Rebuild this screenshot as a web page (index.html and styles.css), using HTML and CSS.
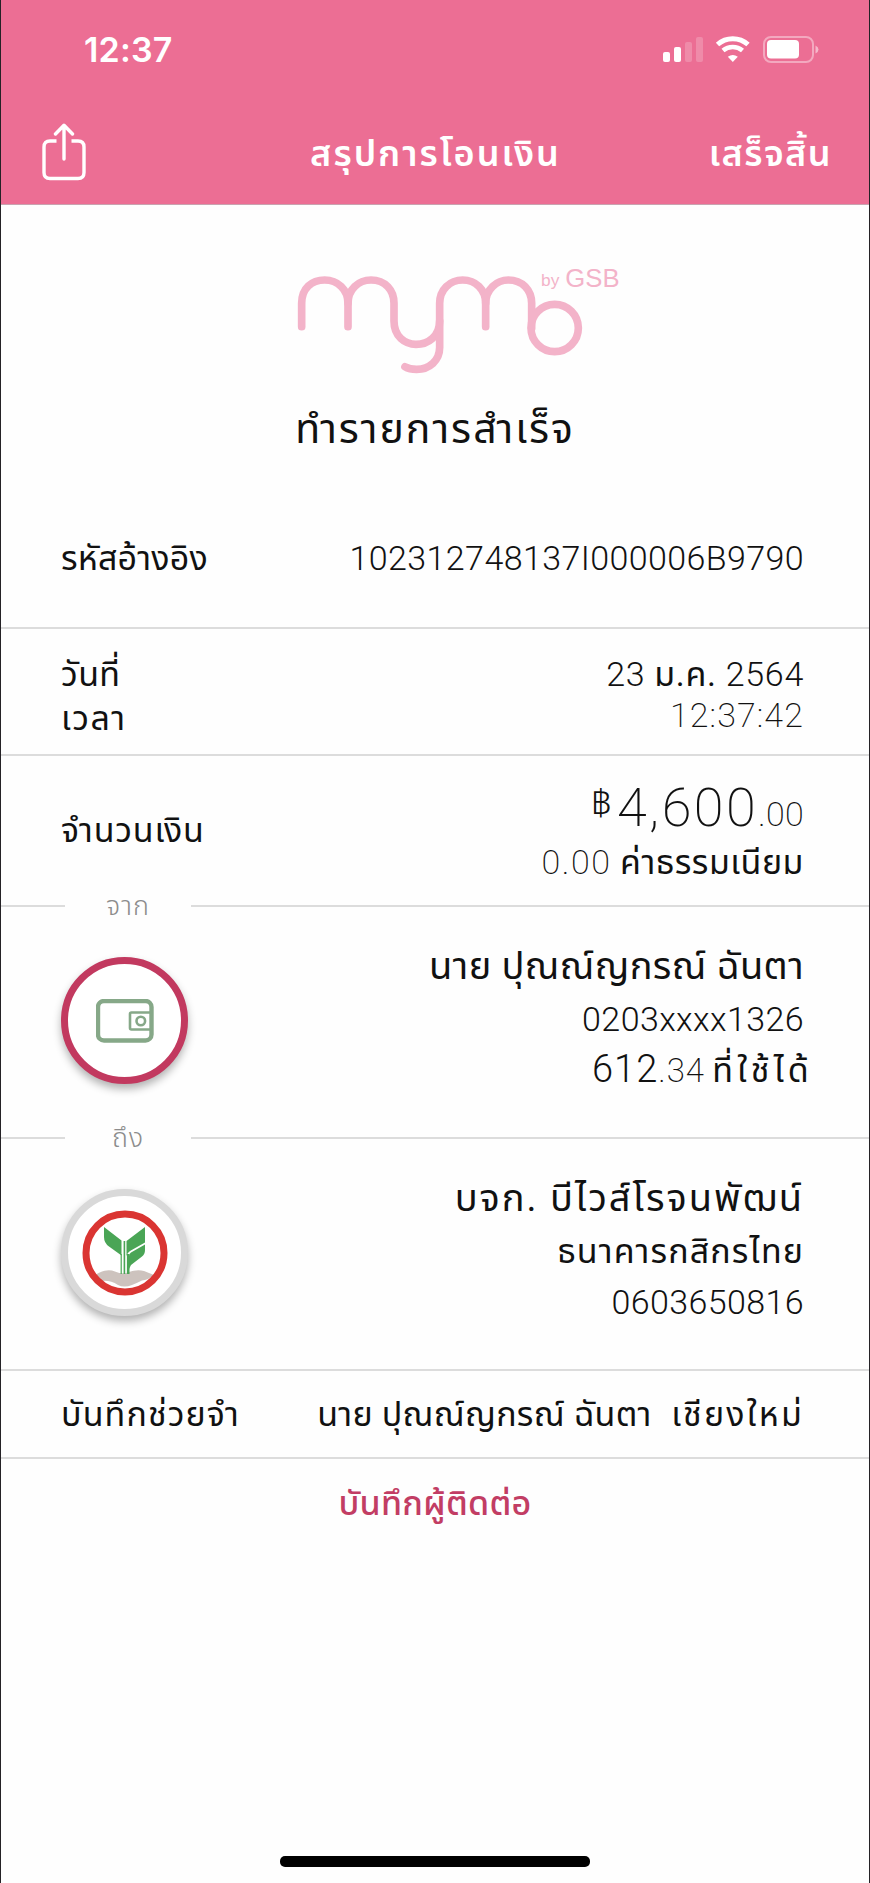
FILE: index.html
```
<!DOCTYPE html>
<html lang="th">
<head>
<meta charset="UTF-8">
<meta name="viewport" content="width=device-width, initial-scale=1.0">
<title>สรุปการโอนเงิน</title>
<link rel="stylesheet" href="styles.css">
</head>
<body>

<div class="screen">
  <header class="header">
    <div class="status-bar">
      <span class="clock">12:37</span>
      <svg class="status-icons" width="156" height="28" viewBox="0 0 156 28" fill="#fff">
        <rect x="0" y="16" width="7" height="10" rx="2"/>
        <rect x="11" y="11" width="7" height="15" rx="2"/>
        <rect x="22" y="6" width="7" height="20" rx="2" opacity=".2"/>
        <rect x="33" y="1" width="7" height="25" rx="2" opacity=".2"/>
        <path d="M54.5 8.5 A23 23 0 0 1 85 8.5" fill="none" stroke="#fff" stroke-width="5"/>
        <path d="M60 14.6 A15 15 0 0 1 79.5 14.6" fill="none" stroke="#fff" stroke-width="4.6"/>
        <path d="M69.8 26 L64.8 20.8 Q69.8 17 74.8 20.8 Z"/>
        <rect x="101" y="1" width="49" height="25" rx="7" fill="none" stroke="#fff" stroke-width="2" opacity=".4"/>
        <rect x="104" y="4" width="32" height="18.5" rx="4"/>
        <path d="M152.5 9.5 Q155.5 11 155.5 13.5 Q155.5 16 152.5 17.5 Z" opacity=".5"/>
      </svg>
    </div>
    <nav class="nav">
      <svg class="share" width="46" height="58" viewBox="0 0 46 58" fill="none" stroke="#fff" stroke-width="3.4" stroke-linecap="round" stroke-linejoin="round">
        <path d="M14.5 18 H8 Q2 18 2 24 V49.5 Q2 55.5 8 55.5 H36 Q42 55.5 42 49.5 V24 Q42 18 36 18 H29.5" stroke-linecap="butt"/>
        <path d="M22 36 V3 M13.5 11 L22 2.2 L30.5 11"/>
      </svg>
      <h1 class="title">สรุปการโอนเงิน</h1>
      <a class="done">เสร็จสิ้น</a>
    </nav>
  </header>

  <section class="intro">
    <svg class="logo" width="400" height="180" viewBox="-105 0 1200 540">
      <g fill="none" stroke="#f3b3c9" stroke-width="23" stroke-linecap="round" stroke-linejoin="round">
        <path d="M95 260 V190 C95 145 125 120 164 120 C203 120 234 148 234 190 V260"/>
        <path d="M234 190 C234 148 265 120 303 120 C345 120 372 150 372 190 V243 C372 290 405 313 438 313 C475 313 509 288 509 243"/>
        <path d="M405 380 C415 386 428 388 440 388 C478 388 509 362 509 322 V190 C509 148 540 120 578 120 C617 120 647 148 647 190 V260"/>
        <path d="M647 190 C647 148 680 120 715 120 C757 120 785 150 785 190 V265"/>
        <circle cx="854" cy="264" r="71"/>
      </g>
      <text class="logo-text" x="813" y="138" font-size="52">by</text>
      <text class="logo-text" x="886" y="140" font-size="77">GSB</text>
    </svg>
    <p class="success">ทำรายการสำเร็จ</p>
  </section>

  <section class="row reference">
    <p class="label-ref">รหัสอ้างอิง</p>
    <p class="ref-number">102312748137I000006B9790</p>
  </section>

  <section class="row datetime">
    <div>
      <p class="label-date">วันที่</p>
      <p class="label-time">เวลา</p>
    </div>
    <div class="right">
      <p class="date">23 <span class="month">ม.ค.</span> 2564</p>
      <p class="time">12:37:42</p>
    </div>
  </section>

  <section class="row amount">
    <p class="label-amount">จำนวนเงิน</p>
    <div class="right">
      <p class="total"><span class="baht">฿</span>4,600<span class="satang">.00</span></p>
      <p class="fee"><span class="fee-value">0.00</span> <span class="fee-label">ค่าธรรมเนียม</span></p>
    </div>
  </section>

  <div class="divider"><span>จาก</span></div>

  <section class="row account">
    <div class="avatar avatar-from">
      <svg width="58" height="44" viewBox="0 0 58 44" fill="none" stroke="#86a888">
        <rect x="2" y="2" width="53.5" height="39.5" rx="6" stroke-width="4.4"/>
        <path d="M54 13.5 H35.5 Q34 13.5 34 15 V29 Q34 30.5 35.5 30.5 H54" stroke-width="2.6"/>
        <circle cx="44.8" cy="22" r="4.3" stroke-width="2.6"/>
      </svg>
    </div>
    <div class="right">
      <p class="name name-from">นาย ปุณณ์ญกรณ์ ฉันตา</p>
      <p class="number">0203xxxx1326</p>
      <p class="balance">612<span class="balance-dec">.34</span> <span class="usable">ที่ใช้ได้</span></p>
    </div>
  </section>

  <div class="divider"><span>ถึง</span></div>

  <section class="row account account-to">
    <div class="avatar avatar-to">
      <svg width="86" height="86" viewBox="0 0 86 86">
        <path d="M13 65 Q22 59 30 60.5 Q38 64 44 63 Q54 59 62 61 L72 65 Q66 70 60 70.5 Q55 73 50 75 Q42 78 36 75 Q28 70 20 71 Z" fill="#cdc3be"/>
        <circle cx="43" cy="43" r="39" fill="none" stroke="#da3532" stroke-width="7"/>
        <g fill="#4aa556">
          <path d="M22 17 L39.5 30.5 V45.5 L27 36.5 Q22 33 22 27 Z"/>
          <path d="M44.5 44 V31 L63 17 V32.5 L48 41 Q45 43 44.5 46 Z"/>
          <path d="M47 59 V46 Q47 43.5 49 42.5 L63 34.5 V40 Q63 44 60 46.5 L49 55 Z"/>
          <path d="M38.6 44 H39.8 V64 H38.6 Z M41.6 31 H43.2 V64 H41.6 Z M44.9 44 H47.5 V64 H44.9 Z"/>
        </g>
      </svg>
    </div>
    <div class="right">
      <p class="name name-to">บจก. บีไวส์โรจนพัฒน์</p>
      <p class="bank">ธนาคารกสิกรไทย</p>
      <p class="number">0603650816</p>
    </div>
  </section>

  <section class="row memo">
    <p class="label-memo">บันทึกช่วยจำ</p>
    <p class="memo-text">นาย ปุณณ์ญกรณ์ ฉันตา&nbsp; <span class="city">เชียงใหม่</span></p>
  </section>

  <a class="save-contact">บันทึกผู้ติดต่อ</a>

  <div class="home-bar"></div>
</div>

</body>
</html>
```
FILE: styles.css
```
* {
  box-sizing: border-box;
}
body {
  margin: 0;
  font-family: Roboto, "Noto Sans Thai", "Noto Sans", sans-serif;
  font-weight: 400;
  font-size: 34px;
  line-height: 40px;
  color: #111;
}
p, h1 {
  margin: 0;
  white-space: nowrap;
}
svg {
  display: block;
}
.screen {
  display: flex;
  flex-direction: column;
  height: 1883px;
  border-left: 1px solid #242226;
  border-right: 1px solid #242226;
  background-color: #fefefe;
}

/* header */
.header {
  height: 205px;
  background-color: #ec6e94;
  border-bottom: 1px solid #c9a3b0;
  color: #fff;
}
.status-bar {
  display: flex;
  justify-content: space-between;
  height: 122px;
  padding: 30px 50px 0 83px;
}
.clock {
  font-family: Inter, sans-serif;
  font-weight: 600;
  font-size: 34px;
  letter-spacing: 0.2px;
}
.status-icons {
  margin-top: 6px;
}
.nav {
  display: grid;
  grid-template-columns: 250px 1fr 250px;
  padding: 0 37px 0 41px;
}
.share {
  margin-top: 1px;
}
.title, .done {
  padding-top: 12px;
  font-size: 36px;
  font-weight: 600;
  line-height: 40px;
  text-align: center;
  letter-spacing: 2px;
}
.title {
  margin-left: -3px;
}
.done {
  text-align: right;
  letter-spacing: 1.4px;
}

/* logo and result */
.intro {
  padding-top: 35px;
  text-align: center;
}
.logo {
  margin: 0 auto;
}
.logo-text {
  fill: #f3b3c9;
  font-family: "Liberation Sans", sans-serif;
}
.success {
  font-size: 41px;
  line-height: 50px;
  margin-top: -16px;
  letter-spacing: 2px;
}

/* detail rows */
.row {
  display: flex;
  justify-content: space-between;
  padding: 0 65px 0 60px;
}
.right {
  text-align: right;
}
.reference {
  height: 175px;
  padding-top: 84px;
  border-bottom: 2px solid #dcdcdc;
}
.label-ref {
  letter-spacing: 0.2px;
}
.ref-number {
  font-weight: 300;
  letter-spacing: 0.4px;
}
.datetime {
  height: 127px;
  padding-top: 25px;
  border-bottom: 2px solid #dcdcdc;
}
.label-date {
  letter-spacing: 0.4px;
}
.label-time {
  margin-top: 4px;
  letter-spacing: 1.5px;
}
.date {
  font-weight: 300;
  letter-spacing: 0.7px;
}
.month {
  font-weight: 400;
}
.time {
  margin-top: 1px;
  font-weight: 200;
  letter-spacing: 1.1px;
}
.amount {
  height: 140px;
}
.label-amount {
  padding-top: 54px;
  letter-spacing: 0.8px;
}
.total {
  padding-top: 22px;
  font-size: 54px;
  line-height: 60px;
  font-weight: 200;
  letter-spacing: 2.4px;
}
.baht {
  margin-right: 3px;
  font-size: 36px;
  font-weight: 300;
  line-height: 1;
  vertical-align: 11px;
}
.satang {
  font-size: 34px;
  line-height: 1;
  letter-spacing: 0.3px;
}
.fee {
  margin-top: 4px;
}
.fee-value {
  font-weight: 200;
  letter-spacing: 1.6px;
}
.fee-label {
  letter-spacing: 0.5px;
}
.divider {
  display: grid;
  grid-template-columns: 64px 126px 1fr;
  align-items: center;
  height: 20px;
  font-size: 27px;
  font-weight: 300;
  line-height: 20px;
  letter-spacing: 1px;
  color: #8c8c8c;
  text-align: center;
}
.divider::before, .divider::after {
  content: "";
  height: 2px;
  background-color: #dcdcdc;
}

/* accounts */
.account {
  height: 212px;
}
.account-to {
  height: 221px;
}
.avatar {
  display: flex;
  align-items: center;
  justify-content: center;
  width: 127px;
  height: 127px;
  margin-top: 41px;
  border: 7px solid #c2395f;
  border-radius: 50%;
  background-color: #fff;
  box-shadow: 0 5px 9px rgba(0, 0, 0, 0.3);
}
.avatar-to {
  border-color: #d9d9d9;
}
.name {
  padding-top: 26px;
  font-size: 38px;
  line-height: 48px;
}
.name-from {
  letter-spacing: 0.4px;
}
.name-to {
  letter-spacing: 2px;
}
.bank {
  margin-top: 9px;
  letter-spacing: 1.1px;
}
.number {
  margin-top: 9px;
  font-weight: 300;
  letter-spacing: 0.4px;
}
.account-to .number {
  margin-top: 11px;
}
.balance {
  margin-top: 10px;
  margin-right: -9px;
  font-size: 38px;
  font-weight: 300;
  letter-spacing: 1px;
}
.balance-dec {
  font-size: 33px;
  font-weight: 200;
}
.usable {
  margin-left: -3px;
  font-size: 34px;
  font-weight: 400;
  letter-spacing: 4.2px;
}

/* memo */
.memo {
  height: 90px;
  padding-top: 23px;
  border-top: 2px solid #dcdcdc;
  border-bottom: 2px solid #dcdcdc;
}
.label-memo {
  letter-spacing: 1.1px;
}
.memo-text {
  letter-spacing: 0.3px;
}
.city {
  margin-left: 2px;
  letter-spacing: 2.2px;
}
.save-contact {
  padding-top: 24px;
  color: #c23d64;
  font-weight: 500;
  text-align: center;
  letter-spacing: 0.3px;
}
.home-bar {
  width: 310px;
  height: 11px;
  margin: auto auto 16px;
  border-radius: 5px;
  background-color: #000;
}
```
